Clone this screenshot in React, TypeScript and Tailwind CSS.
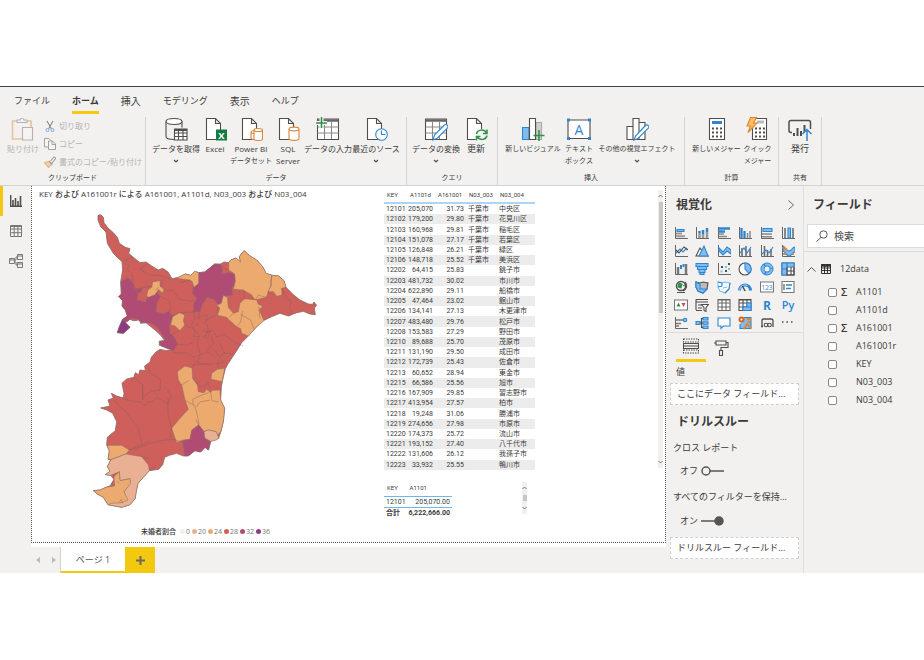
import { ReactNode } from 'react'

const INK = '#504e4c'
const BLUE = '#2e86d1'
const SKY = '#7fbdf0'
const GREEN = '#2f9148'
const ORANGE = '#dd8538'

interface IconProps {
  size?: number
  box?: number
  children: ReactNode
}

function Icon({ size = 24, box = 24, children }: IconProps) {
  return (
    <svg width={size} height={size} viewBox={`0 0 ${box} ${box}`} fill="none" stroke={INK} strokeWidth="1.1" aria-hidden="true" className="shrink-0">
      {children}
    </svg>
  )
}

const page = <path d="M3.5 1.5h9l5 5v16h-14zM12.5 1.5v5h5" fill="#fff" />
const tableGrid = (
  <>
    <path d="M1.5 2h21v20.5h-21z" fill="#fff" />
    <path d="M1.5 10h21M1.5 16h21M8.5 5v17M15.5 5v17" stroke="#8a8886" />
    <path d="M1.5 3.500h21" stroke="#666" strokeWidth="2.500" />
  </>
)

const icons: Record<string, ReactNode> = {
  paste: (
    <>
      <path d="M6 4H1.5v18h9.5M16 4h4v6" stroke="#e8c39c" strokeWidth="1.6" />
      <path d="M6 5.5V3h3c0-2 4-2 4 0h3v2.5z" stroke="#b5b3b1" />
      <path d="M11.5 10.5h10v12.500h-10z" stroke="#b5b3b1" fill="#f5f4f3" />
    </>
  ),
  getData: (
    <>
      <path d="M2 4.5v15c0 2 4 3 8 3M18 4.5v6" />
      <path d="M2 4.5c0-4 16-4 16 0s-16 4-16 0z" fill="#fff" />
      <path d="M10.5 12h12.5v11h-12.500zM10.5 16h12.500M10.5 19.5h12.500M14.5 12v11M19 12v11" fill="#fff" />
      <path d="M10.5 13h12.500" strokeWidth="2" />
    </>
  ),
  excel: (
    <>
      {page}
      <rect x="13" y="12.500" width="11" height="11" fill="#107c41" stroke="none" />
      <text x="18.500" y="21.500" fontSize="9.500" fontWeight="700" textAnchor="middle" fill="#fff" stroke="none">X</text>
    </>
  ),
  powerBi: (
    <>
      {page}
      <path d="M12 15v6c0 2 8 2 8 0v-6c0-2-8-2-8 0c0 2 8 2 8 0" stroke={ORANGE} fill="#fff" />
      <path d="M15 13v9c0 2 8.5 2 8.5 0v-9c0-2-8.5-2-8.5 0c0 2 8.5 2 8.5 0" stroke={ORANGE} fill="#fff" />
    </>
  ),
  sql: (
    <>
      {page}
      <path d="M13 12v9.5c0 2.500 10 2.500 10 0V12c0-2.500-10-2.500-10 0c0 2.500 10 2.500 10 0" stroke={ORANGE} fill="#fff" />
    </>
  ),
  enterData: (
    <>
      {tableGrid}
      <path d="M0 6h11M5.5 0v11" stroke="#f2f1f0" strokeWidth="4" />
      <path d="M0 6h11M5.5 0v11" stroke={GREEN} strokeWidth="1.5" />
    </>
  ),
  recent: (
    <>
      {page}
      <circle cx="17.5" cy="17.5" r="5.8" stroke={BLUE} fill="#fff" />
      <path d="M17.5 13.5v4h4" stroke={BLUE} />
    </>
  ),
  transform: (
    <>
      {tableGrid}
      <path d="M9 23l1.500-5L20.5 8c1.500-1.500 4.500 1 3 3L13.5 21z" stroke={BLUE} fill="#fff" />
    </>
  ),
  refresh: (
    <>
      {page}
      <path d="M11.5 12h12v12h-12z" fill="#f5f4f3" stroke="none" />
      <path d="M12.5 17c1-5 8-5 10-1M23 12.5V16.5h-4M23 18.5c-1 5-8 5-10 1M12.5 23.5v-4h4" stroke={GREEN} strokeWidth="1.5" />
    </>
  ),
  newVisual: (
    <>
      <path d="M1.5 10.5h6.5v12h-6.500z" fill={SKY} stroke={BLUE} />
      <path d="M15 5.5h5.5v17h-5.500z" fill="#d3d1cf" stroke="#aaa" />
      <path d="M8.5 1.5h6v21h-6z" fill="#fff" />
      <path d="M12.5 18.5h11M18 13v11" stroke={GREEN} strokeWidth="1.6" />
    </>
  ),
  textBox: (
    <>
      <path d="M1 3h22v18.5H1z" fill="#fff" />
      <text x="12" y="17.500" fontSize="14" textAnchor="middle" fill={BLUE} stroke="none">A</text>
      <path d="M0 3h3M21 3h3M0 21.5h3M21 21.5h3" stroke={BLUE} strokeWidth="3" />
    </>
  ),
  moreVisuals: (
    <>
      <path d="M2 9.5h6v13h-6zM14 5.5h6v17h-6zM8 1.5h6v21h-6z" fill="#fff" />
      <path d="M9 23l1.500-4L20.5 8.5c1.500-1.500 4.500.5 3 2.500L13 21.5z" stroke={BLUE} fill="#fff" />
    </>
  ),
  measure: (
    <>
      <path d="M4.5 1.5h15v21h-15z" fill="#fff" />
      <path d="M7 5.5h10" stroke={BLUE} strokeWidth="3" />
      <path d="M7 11.5h10M7 15.5h10M7 19.5h10" strokeWidth="2" strokeDasharray="2 2" />
    </>
  ),
  quickMeasure: (
    <>
      <path d="M6.5 1.5h14v21h-14z" fill="#fff" />
      <path d="M11 5h7" stroke="#bbb" strokeWidth="3" />
      <path d="M9 11.5h10M9 15.5h10M9 19.5h10" strokeWidth="2" strokeDasharray="2 2" />
      <path d="M4.5.5h6L7.5 6H11L2 15.5 4.5 9H1z" fill="#fbc05c" stroke={ORANGE} />
    </>
  ),
  publish: (
    <>
      <path d="M4 15.5H3c-1.500 0-2-1-2-2V5.5c0-1.500 1-2 2-2h17.500c1.500 0 2 1 2 2V12" strokeWidth="1.5" />
      <path d="M6 19v-3M9.5 19v-8M13 19v-5M16.5 15v-7" strokeWidth="2" />
      <path d="M19 24V12.5M14.5 17l4.500-4.500 4.500 4.500" stroke={BLUE} strokeWidth="1.5" />
    </>
  ),
}

interface Tool {
  icon: string
  lines: string[]
  width: string
  size?: string
  subSize?: string
  menu?: boolean
}

const groups: { name: string; width: string; tools: Tool[] }[] = [
  {
    name: 'データ',
    width: 'w-[261px]',
    tools: [
      { icon: 'getData', lines: ['データを取得'], width: 'w-12', menu: true },
      { icon: 'excel', lines: ['Excel'], width: 'w-[30px]' },
      { icon: 'powerBi', lines: ['Power BI', 'データセット'], width: 'w-[42px]', subSize: 'text-[7px]' },
      { icon: 'sql', lines: ['SQL', 'Server'], width: 'w-8' },
      { icon: 'enterData', lines: ['データの入力'], width: 'w-12' },
      { icon: 'recent', lines: ['最近のソース'], width: 'w-12', menu: true },
    ],
  },
  {
    name: 'クエリ',
    width: 'w-[91px]',
    tools: [
      { icon: 'transform', lines: ['データの変換'], width: 'w-12', menu: true },
      { icon: 'refresh', lines: ['更新'], width: 'w-8', size: 'text-[9px]' },
    ],
  },
  {
    name: '挿入',
    width: 'w-[187px]',
    tools: [
      { icon: 'newVisual', lines: ['新しいビジュアル'], width: 'w-[62px]', size: 'text-[7px]' },
      { icon: 'textBox', lines: ['テキスト', 'ボックス'], width: 'w-[30px]', size: 'text-[7px]' },
      { icon: 'moreVisuals', lines: ['その他の視覚エフェクト'], width: 'w-[86px]', size: 'text-[7px]', menu: true },
    ],
  },
  {
    name: '計算',
    width: 'w-[94px]',
    tools: [
      { icon: 'measure', lines: ['新しいメジャー'], width: 'w-[52px]', size: 'text-[7px]' },
      { icon: 'quickMeasure', lines: ['クイック', 'メジャー'], width: 'w-[30px]', size: 'text-[7px]' },
    ],
  },
  {
    name: '共有',
    width: 'w-[43px]',
    tools: [{ icon: 'publish', lines: ['発行'], width: 'w-8', size: 'text-[9px]' }],
  },
]

function Chevron() {
  return (
    <svg width="6" height="5" viewBox="0 0 6 5" fill="none" stroke={INK} strokeWidth="1.2" className="mt-1">
      <path d="M1 1l2 2 2-2" />
    </svg>
  )
}

function ToolButton({ tool }: { tool: Tool }) {
  return (
    <button className={`flex flex-col items-center shrink-0 whitespace-nowrap leading-3 ${tool.width} ${tool.size ?? 'text-[8px]'}`}>
      <Icon>{icons[tool.icon]}</Icon>
      <span className="mt-[2px]">{tool.lines[0]}</span>
      {tool.lines[1] && <span className={tool.subSize}>{tool.lines[1]}</span>}
      {tool.menu && <Chevron />}
    </button>
  )
}

function Ribbon() {
  return (
    <header className="border-t border-[#444] bg-[#f2f1f0] border-b border-b-[#d4d2d0]">
      <nav className="flex items-start gap-[22px] h-[30px] pl-[14px] pt-[6px] text-[9px] leading-4 whitespace-nowrap">
        <a href="#file">ファイル</a>
        <a href="#home" className="font-bold border-b-3 border-[#f2c811] h-[21px]">ホーム</a>
        <a href="#insert" className="text-[10px]">挿入</a>
        <a href="#modeling">モデリング</a>
        <a href="#view" className="text-[10px]">表示</a>
        <a href="#help">ヘルプ</a>
      </nav>
      <div className="flex h-[68px] text-[8px]">
        <section className="w-[146px] shrink-0 flex flex-col border-r border-[#d4d2d0] whitespace-nowrap">
          <div className="flex-1 flex pl-[7px] text-[#b5b3b1]">
            <button className="flex flex-col items-center w-8 shrink-0 leading-3 mr-[5px]">
              <Icon>{icons.paste}</Icon>
              <span className="mt-[2px]">貼り付け</span>
            </button>
            <div className="flex flex-col leading-[18px]">
              <button className="flex items-center gap-[3px]">
                <Icon size={12} box={12}>
                  <path d="M3 1l4.500 8M9 1L4.500 9" stroke="#8a8886" />
                  <circle cx="3.5" cy="10" r="1.5" stroke="#94b8dc" />
                  <circle cx="8.5" cy="10" r="1.5" stroke="#94b8dc" />
                </Icon>
                切り取り
              </button>
              <button className="flex items-center gap-[3px]">
                <Icon size={12} box={12}>
                  <path d="M4 9H.5V.5H5L7 2.5M4.5 3h4l3 3v5.500h-7zM8 3v3.500h3" stroke="#a3a19f" fill="#f7f6f5" strokeWidth="1" />
                </Icon>
                コピー
              </button>
              <button className="flex items-center gap-[3px]">
                <Icon size={12} box={12}>
                  <path d="M.5 6.5l4.500-1 2.500 3-3 3z" fill="#f5d3ac" stroke="#e5ae7a" />
                  <path d="M5 5l3.500 3.500M6.5 5L10 1l2 1-4 5" stroke="#a3a19f" />
                </Icon>
                書式のコピー/貼り付け
              </button>
            </div>
          </div>
          <h2 className="h-[14px] text-center text-[7px] leading-[14px]">クリップボード</h2>
        </section>
        {groups.map((group) => (
          <section key={group.name} className={`flex flex-col shrink-0 border-r border-[#d4d2d0] ${group.width}`}>
            <div className="flex-1 flex justify-center items-start">
              {group.tools.map((tool) => (
                <ToolButton key={tool.icon} tool={tool} />
              ))}
            </div>
            <h2 className="h-[14px] text-center text-[7px] leading-[14px]">{group.name}</h2>
          </section>
        ))}
      </div>
    </header>
  )
}

function SideNav() {
  return (
    <nav className="w-[31px] shrink-0 bg-[#f2f1f0] flex flex-col">
      <button aria-label="レポート" className="h-[30px] flex items-center pl-[7px] border-l-3 border-[#f2c811]">
        <Icon size={12} box={12}>
          <path d="M.6 0v11.400H12M3 11V5M5.5 11V3M8 11V6M10.5 11V1" strokeWidth="1.6" />
        </Icon>
      </button>
      <button aria-label="データ" className="h-[30px] flex items-center pl-[10px]">
        <Icon size={12} box={12}>
          <path d="M.5.5h11v11H.5zM.5 4h11M.5 7.7h11M4.2 2v9.500M7.9 2v9.500M.5 1.5h11" strokeWidth="1" stroke="#777" />
        </Icon>
      </button>
      <button aria-label="モデル" className="h-[30px] flex items-center pl-[9px]">
        <Icon size={14} box={14}>
          <path d="M.5 4.5h5v5h-5zM8.5.5h5v5h-5zM8.5 8.5h5v5h-5zM.5 6h5M8.5 2h5M8.5 10h5M5.5 6h1.500V3h1.500M5.5 8h1.500v3h1.500" strokeWidth="1" stroke="#777" />
        </Icon>
      </button>
    </nav>
  )
}

const RED = '#cf5f5b'
const AMBER = '#ecaa6e'
const PEACH = '#eab094'
const PLUM = '#b04c74'
const VIOLET = '#8d3a82'

const outline =
  '54,46 62,44 70,52 72,68 84,84 100,98 112,112 118,130 136,142 150,146 146,160 160,172 180,188 198,186 215,198 235,210 248,205 264,216 276,236 296,232 316,222 332,226 344,214 356,218 374,216 392,202 404,192 422,192 432,186 446,188 452,180 468,174 482,186 478,170 492,152 510,168 530,180 548,200 558,220 576,226 596,228 612,242 618,262 640,284 660,300 685,312 698,313 702,306 710,316 703,324 706,344 690,342 670,334 650,338 625,348 600,340 575,350 550,362 530,380 505,408 485,428 465,460 445,490 436,506 430,530 424,560 422,600 434,625 430,665 424,690 416,715 392,724 386,750 376,742 362,756 345,752 325,767 310,768 290,760 268,766 254,772 248,794 236,808 208,812 190,832 174,850 168,878 166,895 150,914 125,922 104,918 84,914 70,892 52,882 40,872 60,870 78,862 90,858 102,838 92,826 76,824 90,814 82,800 92,780 84,778 88,752 80,735 82,712 106,692 110,665 98,640 80,630 62,624 90,618 84,600 100,594 94,580 110,588 130,594 132,580 126,550 140,537 162,532 166,518 176,524 180,510 196,512 194,498 210,486 214,472 228,456 240,448 258,452 280,450 258,440 238,436 238,424 254,422 244,408 232,396 215,382 198,368 182,370 178,360 160,362 150,358 136,368 150,382 130,400 112,398 118,380 128,358 142,348 136,330 126,318 128,302 116,290 124,282 122,245 128,210 126,185 112,172 100,160 82,130 78,96 62,80 54,60'

const regions: [string, string][] = [
  [PLUM, '123,246 144,233 160,250 166,267 186,264 184,275 172,280 170,300 196,306 203,290 222,282 226,270 241,290 230,310 228,335 250,342 266,333 276,350 268,375 270,400 285,415 292,432 280,452 262,446 243,438 238,424 256,421 248,405 230,380 210,368 198,368 182,366 178,358 155,354 136,368 128,358 142,348 136,330 126,318 128,302 116,290 124,282'],
  [VIOLET, '128,358 136,368 150,382 130,400 112,398 118,380'],
  [PLUM, '356,218 374,216 392,202 404,192 422,194 428,210 424,222 446,218 466,222 466,244 455,265 458,285 430,288 424,312 415,316 405,300 380,290 366,315 360,335 340,335 342,310 350,295 338,280 340,258 356,252'],
  [AMBER, '446,188 452,180 468,174 482,186 478,170 492,152 510,168 530,180 548,200 558,220 576,226 572,244 574,262 564,275 560,292 525,300 515,285 490,270 460,268 466,244 464,222 446,210'],
  [AMBER, '576,226 596,228 612,242 618,262 605,265 606,285 590,289 580,275 565,275 572,260'],
  [AMBER, '430,286 442,292 445,322 460,340 475,335 480,310 494,296 530,300 535,313 548,318 538,330 552,362 530,380 505,408 485,400 482,386 470,380 450,362 440,352 412,346 420,325 409,316 424,310'],
  [AMBER, '290,234 316,222 332,226 344,214 356,218 356,250 342,262 336,244 328,240 310,238'],
  [AMBER, '200,288 204,270 215,262 218,246 240,242 240,258 252,268 248,280 236,268 225,284 205,292'],
  [AMBER, '278,350 298,338 314,345 310,362 314,375 300,392 285,378 272,374'],
  [AMBER, '292,515 315,498 336,504 338,535 352,555 355,575 372,578 380,568 392,578 397,571 420,570 422,600 434,625 430,665 422,695 412,705 408,695 385,690 372,695 356,675 340,690 330,718 310,720 290,728 275,685 300,655 325,628 315,600 305,555 295,540'],
  [AMBER, '395,520 412,508 434,505 426,545 405,540 393,538'],
  [PLUM, '356,675 372,695 374,715 392,725 384,750 374,742 360,756 345,752 325,768 314,768 308,722 330,718 335,690'],
  [PEACH, '372,695 385,690 408,695 416,712 410,720 392,724 375,715'],
  [AMBER, '82,736 125,736 148,750 138,762 95,778 84,778 88,755'],
  [PEACH, '93,779 138,762 185,770 205,795 208,812 190,832 174,850 168,878 166,895 150,914 125,922 104,918 84,914 95,908 140,900 132,875 150,850 150,836 120,842 118,815 92,826 76,824 90,814 82,800'],
  [AMBER, '40,872 60,870 78,862 104,858 102,830 118,815 120,842 150,836 152,850 132,875 144,900 126,908 95,910 84,914 70,892 52,882'],
]

const borders = [
  'M128 182l18-6 14-4M138 178l10 18-6 12 14 16 4 18-12-6M180 210l10-12 14-6M182 208l24 16 40 4 28 10M186 264l32-6M250 235l-8 26M252 268l28 6 20 24 36 6 6-4M226 270l10-8M241 290l28 12 2 32M170 300l4-24M276 350l20-12 48-2M314 375l26 12 18 20M300 390l-30 16',
  'M340 335l4 22-10 18 12 16-6 18 20 2M360 335l-4 18 26-10-4 22 12-12 20-8M344 350l14 6M346 376l10-4M380 290l-10 20M375 365l10 20-4 12 18-6 12 20 18-8 36 24 24 10M370 390l12 10-12 10 12 4 8-14-10-4 14-4M358 408l-8 22 12 34 24-8 20 20M360 464l-20 8-20-14-40 0M292 432l28 4 22-10M342 484l34 10 54-6M342 490l-4 14M338 495l50-4M360 464l-8 24M380 454l20-24-6-20M420 430l14 30-16 10 14 20M415 478l-2 28M406 450l8 20M430 458l30 4M270 370l6-30M284 412l-14-8',
  'M446 210l-22-10M415 316l-6 24M460 340l-12 12M470 380l12-14 6-34M482 344l30 16 10 28M540 355l-4-34M525 300l10-14 26 6M605 265l14 30 14 8-4 22 6 10-10 14M490 270l4 28M576 250l-8 16M330 240l-30 8',
  'M162 532l14 12 12 10v46M204 495l6 24 32 20-2 32-24 2-26 16M130 594l18 8 36 4 8 12 12-12 12-2 14-12 32 18 12-18-10-20-12-12M264 590l0 50 10 45M100 595l20 26 18 14 36 48 14 56M188 740l-40 10M188 738l44-14 44-6 32 8M275 685l-4 28M188 600l2-26M315 600l30 18 8 32 4 24M305 555l22-14M340 614l-2-16 26-12 22-8M392 578l4 24 20 4M350 620l10-14 30-6M338 535l24 26 20-8 12-12M382 548l10 18M356 675l-8-16M185 770l22 6',
  'M148 750l60-26M118 906l6-8 4 12M110 844l8 6M208 812l18-14',
]

function ChibaMap() {
  return (
    <svg viewBox="0 0 750 950" className="w-[250px] self-start ml-12" role="img" aria-label="千葉県">
      <polygon points={outline} fill={RED} stroke="#8a6a64" strokeWidth="2.5" strokeLinejoin="round" />
      {regions.map(([fill, points], i) => (
        <polygon key={i} points={points} fill={fill} stroke="#84706a" strokeWidth="1.5" strokeLinejoin="round" />
      ))}
      <g fill="none" stroke="#7f5f5c" strokeWidth="1.6" strokeOpacity="0.8">
        {borders.map((d) => (
          <path key={d} d={d} />
        ))}
      </g>
    </svg>
  )
}

const legend = [
  { value: 0, color: 'bg-[#f3f0e8]' },
  { value: 20, color: 'bg-[#eab094]' },
  { value: 24, color: 'bg-[#ecaa6e]' },
  { value: 28, color: 'bg-[#cf5f5b]' },
  { value: 32, color: 'bg-[#b04c74]' },
  { value: 36, color: 'bg-[#8d3a82]' },
]

const rows: string[][] = [
  ['12101', '205,070', '31.73', '千葉市', '中央区'],
  ['12102', '179,200', '29.80', '千葉市', '花見川区'],
  ['12103', '160,968', '29.81', '千葉市', '稲毛区'],
  ['12104', '151,078', '27.17', '千葉市', '若葉区'],
  ['12105', '126,848', '26.21', '千葉市', '緑区'],
  ['12106', '148,718', '25.52', '千葉市', '美浜区'],
  ['12202', '64,415', '25.83', '', '銚子市'],
  ['12203', '481,732', '30.02', '', '市川市'],
  ['12204', '622,890', '29.11', '', '船橋市'],
  ['12205', '47,464', '23.02', '', '館山市'],
  ['12206', '134,141', '27.13', '', '木更津市'],
  ['12207', '483,480', '29.76', '', '松戸市'],
  ['12208', '153,583', '27.29', '', '野田市'],
  ['12210', '89,688', '25.70', '', '茂原市'],
  ['12211', '131,190', '29.50', '', '成田市'],
  ['12212', '172,739', '25.43', '', '佐倉市'],
  ['12213', '60,652', '28.94', '', '東金市'],
  ['12215', '66,586', '25.56', '', '旭市'],
  ['12216', '167,909', '29.85', '', '習志野市'],
  ['12217', '413,954', '27.57', '', '柏市'],
  ['12218', '19,248', '31.06', '', '勝浦市'],
  ['12219', '274,656', '27.98', '', '市原市'],
  ['12220', '174,373', '25.72', '', '流山市'],
  ['12221', '193,152', '27.40', '', '八千代市'],
  ['12222', '131,606', '26.12', '', '我孫子市'],
  ['12223', '33,932', '25.55', '', '鴨川市'],
]

function CityTable() {
  return (
    <table className="table-fixed w-[151px] h-[283px] text-[7px] leading-[10px] whitespace-nowrap">
      <thead className="border-b-2 border-[#a9d5f7]">
        <tr className="h-4 text-left text-[6px]">
          <th className="w-[24px] font-normal pl-[3px]">KEY</th>
          <th className="w-[27px] font-normal pl-[2px]">A1101d</th>
          <th className="w-[31px] font-normal pl-[3px]">A161001</th>
          <th className="w-[31px] font-normal pl-[3px]">N03_003</th>
          <th className="font-normal pl-[3px]">N03_004</th>
        </tr>
      </thead>
      <tbody>
        {rows.map(([key, population, rate, city, ward]) => (
          <tr key={key} className="even:bg-[#ececec]">
            <td className="pl-[2px]">{key}</td>
            <td className="text-right pr-[2px]">{population}</td>
            <td className="text-right pr-[2px]">{rate}</td>
            <td className="pl-[2px]">{city}</td>
            <td className="pl-[2px]">{ward}</td>
          </tr>
        ))}
      </tbody>
    </table>
  )
}

function ScrollBar({ thumb }: { thumb: string }) {
  return (
    <div className="w-[5px] flex flex-col items-center justify-between bg-[#f1f0ef] py-1">
      <svg width="5" height="4" viewBox="0 0 5 4" fill="none" stroke="#777"><path d="M.5 3l2-2 2 2" /></svg>
      <div className="flex-1 w-[4px]">
        <div className={`bg-[#c9c7c6] ${thumb}`} />
      </div>
      <svg width="5" height="4" viewBox="0 0 5 4" fill="none" stroke="#777"><path d="M.5 1l2 2 2-2" /></svg>
    </div>
  )
}

function TotalTable() {
  return (
    <div className="flex items-start mt-[10px] justify-between w-[143px]">
      <table className="w-[68px] text-[7px] leading-[10px] whitespace-nowrap">
        <thead>
          <tr className="h-4 text-left text-[6px] border-b border-[#6db6ee]">
            <th className="font-normal pl-[3px]">KEY</th>
            <th className="font-normal pl-[3px]">A1101</th>
          </tr>
        </thead>
        <tbody>
          <tr className="h-[11px]">
            <td className="pl-[2px]">12101</td>
            <td className="text-right pr-[2px]">205,070.00</td>
          </tr>
          <tr className="h-3 font-bold border-t border-[#6db6ee]">
            <td className="pl-[2px]">合計</td>
            <td className="text-right pr-[2px]">6,222,666.00</td>
          </tr>
        </tbody>
      </table>
      <div className="flex h-8 mt-[2px]">
        <ScrollBar thumb="h-[6px] mt-[5px]" />
      </div>
    </div>
  )
}

function Canvas() {
  return (
    <main className="flex-1 min-w-0 flex flex-col bg-white">
      <div className="flex h-[357px] border-x border-b border-dotted border-[#555]">
        <section className="w-[352px] shrink-0 flex flex-col pt-[2px]">
          <h1 className="pl-[7px] text-[8px] leading-3 font-medium whitespace-nowrap">
            KEY および A161001r による A161001, A1101d, N03_003 および N03_004
          </h1>
          <ChibaMap />
          <div className="flex items-center pl-[109px] mt-[10px] text-[7px] leading-[10px] text-[#777] whitespace-nowrap">
            <span className="font-medium text-[#333] mr-1">未婚者割合</span>
            {legend.map(({ value, color }) => (
              <span key={value} className="flex items-center gap-[1px] mr-[2px]">
                <i className={`size-[5px] rounded-full ${color}`} />
                {value}
              </span>
            ))}
          </div>
        </section>
        <section className="flex-1 pt-[1px] font-['Roboto','Noto_Sans_CJK_JP',sans-serif]">
          <CityTable />
          <TotalTable />
        </section>
        <div className="flex mt-1 mr-[2px] h-[278px]">
          <ScrollBar thumb="h-[111px] mt-[4px]" />
        </div>
      </div>
      <div className="flex h-[26px] mt-1 bg-[#f2f1f0] text-[9px]">
        <div className="flex items-center gap-3 w-[30px] pl-[5px] border-r border-[#d4d2d0] text-[#bbb]">
          <button aria-label="前のページ">
            <svg width="4" height="6" viewBox="0 0 4 6" fill="currentColor"><path d="M4 0v6L0 3z" /></svg>
          </button>
          <button aria-label="次のページ">
            <svg width="4" height="6" viewBox="0 0 4 6" fill="currentColor"><path d="M0 0v6l4-3z" /></svg>
          </button>
        </div>
        <button className="w-16 pt-[2px] bg-white border-b-2 border-[#f2c811] text-[#555]">ページ 1</button>
        <button aria-label="ページの追加" className="w-[30px] bg-[#f2c811] flex items-center justify-center">
          <svg width="9" height="9" viewBox="0 0 9 9" stroke="#6e6a5c" strokeWidth="2"><path d="M0 4.5h9M4.5 0v9" /></svg>
        </button>
      </div>
    </main>
  )
}

const axes = <path d="M1.5 1v11.500H14" stroke="#666" strokeWidth="1" />

const visuals: [string, ReactNode][] = [
  ['積み上げ横棒', <>{axes}<path d="M2 7.5h6M2 10.3h9" stroke="#999" strokeWidth="2" /><path d="M3 3.5h7v2H3z" fill={SKY} stroke={BLUE} /></>],
  ['積み上げ縦棒', <>{axes}<path d="M4.5 5v2M8 4v4M12 2v4" stroke={BLUE} strokeWidth="2.5" /><path d="M4.5 7v5M8 8v4M12 6v6" stroke="#999" strokeWidth="2.5" /></>],
  ['集合横棒', <>{axes}<path d="M2 2.5h11M2 5.5h6" stroke={BLUE} strokeWidth="2.3" /><path d="M2 8h5M2 10.5h8" stroke="#888" strokeWidth="1.5" /></>],
  ['集合縦棒', <>{axes}<path d="M3.5 2v10M6.5 5v7" stroke={BLUE} strokeWidth="2.3" /><path d="M9.5 7v5M12 5v7" stroke="#888" strokeWidth="1.5" /></>],
  ['100% 積み上げ横棒', <>{axes}<path d="M3 2.5h9v3H3z" fill={SKY} stroke={BLUE} /><path d="M2 8h10M2 10.8h10" stroke="#888" strokeWidth="1.5" /></>],
  ['100% 積み上げ縦棒', <>{axes}<path d="M4 2v10M12 2v10" stroke="#888" strokeWidth="2" /><path d="M7 2h2.500v10H7z" fill={SKY} stroke={BLUE} /></>],
  ['折れ線', <>{axes}<path d="M2 9l4-4 3 3 4-4" stroke={BLUE} /><path d="M2 6l3 3 5-6 4 3" /></>],
  ['面', <><path d="M1 12l4-8 3 4 5 4z" fill="#fff" /><path d="M4 12l5-10 4 10z" fill={SKY} stroke={BLUE} /></>],
  ['積み上げ面', <>{axes}<path d="M2 4l4 4 4-5 4 3v4l-4-3-4 4-4-4z" fill={SKY} stroke={BLUE} /></>],
  ['折れ線と積み上げ縦棒', <>{axes}<path d="M4 4v8M8 2v10M12 5v7" stroke="#888" strokeWidth="2" /><path d="M2 9l4-5 3 5 4-6" stroke={BLUE} /></>],
  ['折れ線と集合縦棒', <>{axes}<path d="M4.5 2v10M7.5 6v6M11 5v7" stroke="#666" strokeWidth="1.5" /><path d="M2 10l4-4 3 3 4-6" stroke={BLUE} /></>],
  ['リボン', <>{axes}<path d="M2 2c3 2 3 5 6 5s3-4 6-4v5c-3 0-3 4-6 4s-3-4-6-5z" fill={SKY} stroke={BLUE} /><path d="M2 10h3M11 10h2M2 3l4 3" stroke={ORANGE} strokeWidth="2.2" /></>],
  ['ウォーターフォール', <>{axes}<path d="M4 5v7M12 2v10" stroke="#777" strokeWidth="2.5" /><path d="M7 3v4M9.5 2v3" stroke={BLUE} strokeWidth="2" /></>],
  ['じょうご', <path d="M1 1.5h12v3H1zM2.5 4.5h9v3h-9zM4 7.5h6v3H4zM5 10.5h4v2H5z" fill={SKY} stroke={BLUE} />],
  ['散布図', <>{axes}<path d="M4 5h2M8 9h2M11 2h2" strokeWidth="2" /><path d="M8 5h2M11 7h2M3.5 9.5h2" stroke={SKY} strokeWidth="2" /></>],
  ['円', <><circle cx="7" cy="7" r="6" fill="#fff" stroke={INK} /><path d="M7 7V1a6 6 0 0 1 4 10.500z" fill={SKY} stroke={BLUE} /></>],
  ['ドーナツ', <><circle cx="7" cy="7" r="4.5" stroke={BLUE} strokeWidth="4" /><circle cx="7" cy="7" r="4.5" stroke={SKY} strokeWidth="2.2" strokeDasharray="8 1.4" /></>],
  ['ツリーマップ', <><path d="M1 1h12v12H1z" fill="#fff" /><path d="M1 1h5v6H1zM1 7h5v6H1zM6 1h7v4H6z" fill={SKY} stroke={BLUE} /><path d="M6 5v8h7V5M10 5v8M6 9h7" /></>],
  ['マップ', <><circle cx="7" cy="6" r="4.5" fill="#fff" strokeWidth="1.5" /><path d="M5 3l3 1-1 4-3-1zM9 6l2-1" fill={GREEN} stroke={GREEN} /><path d="M3 12.5h8M11 2c3 3 2 7-2 9" /></>],
  ['塗り分け地図', <><path d="M1 2l4 1 3-1 5 1-1 6-4 4-5-2-2-4z" fill="#bbb" stroke={INK} /><path d="M1 2l4 2v5l7 0-4 4-5-2-2-4z" fill={SKY} stroke={BLUE} /></>],
  ['図形マップ', <><path d="M1 2l4 1 3-1 5 1-1 6-4 4-5-2-2-4z" fill="#fff" stroke={SKY} /><path d="M1 2l4 1v3L1 7M13 3l-1 6-4 4" stroke={BLUE} /><path d="M6 8l4-1" stroke={SKY} /></>],
  ['ゲージ', <><path d="M1.5 10.5a5.500 5.500 0 0 1 11 0" stroke={BLUE} strokeWidth="3" /><path d="M1.5 10.5a5.500 5.500 0 0 1 8-4.900" stroke={SKY} strokeWidth="1.5" /><path d="M7 11L4.5 6" strokeWidth="1.5" /></>],
  ['カード', <><path d="M.5 2h13v10H.5z" fill="#fff" stroke="#777" /><text x="7" y="9.500" fontSize="6.500" textAnchor="middle" fill={BLUE} stroke="none">123</text></>],
  ['複数の行カード', <><path d="M1 1.5h12v11H1z" fill="#fff" stroke="#777" /><path d="M3 4v6" /><path d="M5 5h6M5 8.5h5" stroke={BLUE} strokeWidth="1.5" /></>],
  ['KPI', <><path d="M.5 2h13v10H.5z" fill="#fff" stroke="#777" /><path d="M2.5 8.5l2-4 2 4z" fill={GREEN} stroke="none" /><path d="M7.5 5h4l-2 4z" fill="#d64550" stroke="none" /></>],
  ['スライサー', <><path d="M1 1.5h12M1 12V1.5M1 4h12M3 7h4M3 10h4M1 12.5h6" /><path d="M6.5 6.5h7L11 9.5v4l-2-1V9.5z" fill="#fff" /></>],
  ['テーブル', <path d="M1 1.5h12v11H1zM1 5h12M1 9h12M5 2v10.500M9 2v10.500M1 2h12" fill="#fff" stroke="#666" />],
  ['マトリックス', <><path d="M1 1.5h12v11H1zM1 5h12M1 9h12M5 2v10.500M9 2v10.500M1 2h12" fill="#fff" /><path d="M5 9h8v3.500H5zM9 5h4v4H9z" fill={SKY} stroke={BLUE} /></>],
  ['R スクリプト', <text x="7" y="11.500" fontSize="12" fontWeight="700" textAnchor="middle" fill={BLUE} stroke="none">R</text>],
  ['Python', <text x="7" y="11" fontSize="11" fontWeight="600" textAnchor="middle" fill={BLUE} stroke="none">Py</text>],
  ['主要なインフルエンサー', <>{axes}<path d="M2 4h7M2 7.5h5M2 10h3" stroke="#777" strokeWidth="1.5" /><circle cx="11" cy="4" r="1.8" fill={SKY} stroke={BLUE} /></>],
  ['分解ツリー', <><path d="M1 5.5h4v3H1zM8 1.5h5v2.500H8zM8 5.7h5v2.500H8zM8 10h5v2.500H8z" fill={SKY} stroke={BLUE} /><path d="M5 7h3M8 2.5H6.5v9H8" /></>],
  ['Q&A', <path d="M1 2h12v8H6.5L4 12.5V10H1z" fill="#fff" stroke={BLUE} />],
  ['ArcGIS', <><path d="M6 1.5h7v11H2V8" fill={SKY} stroke={BLUE} /><path d="M6 13l3-5 4 4M9 3h4M10 5l3 2" stroke={ORANGE} strokeWidth="2" /><circle cx="3.5" cy="3.5" r="2" stroke="#d8651d" strokeWidth="2" fill="#fff" /></>],
  ['Power Apps', <><path d="M2 10V4.500C2 3 3 3 4 3h7c1 0 2 0 2 1.500V11M1 10.5h2" fill="none" strokeWidth="1.3" /><circle cx="6" cy="9" r="1.8" /><circle cx="9.5" cy="9" r="1.8" /></>],
  ['その他', <path d="M1 6h12" strokeDasharray="1.500 3" strokeWidth="1.5" />],
]

function DropField({ text }: { text: string }) {
  return (
    <div className="h-[22px] mx-1 pl-[6px] bg-white border border-dashed border-[#d0cecc] leading-[20px] truncate">{text}</div>
  )
}

function Switch({ label, on = false }: { label: string; on?: boolean }) {
  return (
    <button role="switch" aria-checked={on} className="flex items-center gap-[3px] pl-[14px] h-6">
      {label}
      <svg width="24" height="10" viewBox="0 0 24 10" stroke="#555" strokeWidth="1.5" fill="none">
        <path d={on ? 'M0 5h14' : 'M9 5h14'} />
        <circle cx={on ? 18 : 5} cy="5" r="4" fill={on ? '#555' : 'none'} />
      </svg>
    </button>
  )
}

function VisualsPane() {
  return (
    <aside className="w-[138px] shrink-0 flex flex-col bg-[#f2f1f0] border-r border-[#e2e0de] text-[9px] whitespace-nowrap">
      <div className="flex items-center justify-between h-[38px] pl-[10px] pr-[9px]">
        <h2 className="text-[12px] font-bold">視覚化</h2>
        <button aria-label="折りたたむ">
          <svg width="6" height="10" viewBox="0 0 6 10" fill="none" stroke="#666"><path d="M.5.5l5 4.500-5 4.500" /></svg>
        </button>
      </div>
      <div className="grid grid-cols-6 px-[4px] border-b border-[#dddbd9]">
        {visuals.map(([name, drawing]) => (
          <button key={name} aria-label={name} className="h-[18px] flex items-center justify-center">
            <Icon size={14} box={14}>{drawing}</Icon>
          </button>
        ))}
      </div>
      <div className="flex pl-[10px]">
        <button aria-label="フィールド" className="w-[30px] h-[29px] flex items-center justify-center border-b-3 border-[#f2c811]">
          <Icon size={16} box={16}>
            <path d="M.5 1h15v3H.5zM.5 12h15v3H.5z" strokeDasharray="1.500 1" />
            <path d="M.5 5.5h15v5H.5zM.5 8h15" />
          </Icon>
        </button>
        <button aria-label="書式" className="w-[30px] h-[29px] flex items-center justify-center">
          <Icon size={16} box={16}>
            <path d="M3 1h10v4H3zM3 3H1M13 2.5h2v5H8v3M6.5 10.5h3v5h-3z" />
          </Icon>
        </button>
      </div>
      <h3 className="pl-[10px] h-[21px] leading-[20px]">値</h3>
      <DropField text="ここにデータ フィールド..." />
      <h2 className="pl-[11px] text-[12px] font-bold h-[34px] leading-[34px]">ドリルスルー</h2>
      <p className="pl-[7px] h-5 leading-[18px]">クロス レポート</p>
      <Switch label="オフ" />
      <p className="pl-[7px] h-[26px] leading-[28px]">すべてのフィルターを保持...</p>
      <Switch label="オン" on />
      <div className="mt-1">
        <DropField text="ドリルスルー フィールド..." />
      </div>
    </aside>
  )
}

const fields = [
  { name: 'A1101', sum: true },
  { name: 'A1101d', sum: false },
  { name: 'A161001', sum: true },
  { name: 'A161001r', sum: false },
  { name: 'KEY', sum: false },
  { name: 'N03_003', sum: false },
  { name: 'N03_004', sum: false },
]

function FieldsPane() {
  return (
    <aside className="w-[120px] shrink-0 bg-[#f2f1f0] text-[9px] whitespace-nowrap">
      <h2 className="h-[38px] leading-[38px] pl-[9px] text-[12px] font-bold">フィールド</h2>
      <label className="flex items-center h-6 ml-[3px] pl-2 gap-[6px] bg-white border border-r-0 border-[#dddbd9]">
        <svg width="12" height="12" viewBox="0 0 12 12" fill="none" stroke="#555" className="shrink-0"><circle cx="7.5" cy="4.5" r="3.7" /><path d="M5 7.5L.5 11.5" /></svg>
        <input type="search" aria-label="検索" placeholder="検索" className="w-full min-w-0 text-[10px] outline-none placeholder:text-[#444]" />
      </label>
      <div className="mt-[3px] border-t border-[#dddbd9] pt-[7px]">
        <button className="flex items-center h-5 pl-[3px]">
          <svg width="9" height="5" viewBox="0 0 9 5" fill="none" stroke="#555"><path d="M.5 4.5l4-4 4 4" /></svg>
          <svg width="10" height="10" viewBox="0 0 10 10" fill="none" stroke="#333" className="ml-[5px] mr-[9px]">
            <path d="M.5.5h9v9h-9zM.5 4h9M.5 6.5h9M3.5 2v8M6.5 2v8" /><path d="M0 1.5h10" strokeWidth="2.5" />
          </svg>
          12data
        </button>
        <ul className="mt-1">
          {fields.map(({ name, sum }) => (
            <li key={name}>
              <label className="flex items-center h-[18px] pl-[24px]">
                <input type="checkbox" className="appearance-none size-[9px] border border-[#8a8886] rounded-[2px] bg-white" />
                <span className="w-[19px] pl-1 text-[11px] leading-[18px] font-semibold">{sum && 'Σ'}</span>
                {name}
              </label>
            </li>
          ))}
        </ul>
      </div>
    </aside>
  )
}

export default function App() {
  return (
    <div className="min-h-screen bg-white pt-[86px] text-[#3b3a39] font-['Open_Sans','Noto_Sans_CJK_JP',sans-serif]">
      <Ribbon />
      <div className="flex">
        <SideNav />
        <Canvas />
        <VisualsPane />
        <FieldsPane />
      </div>
    </div>
  )
}
